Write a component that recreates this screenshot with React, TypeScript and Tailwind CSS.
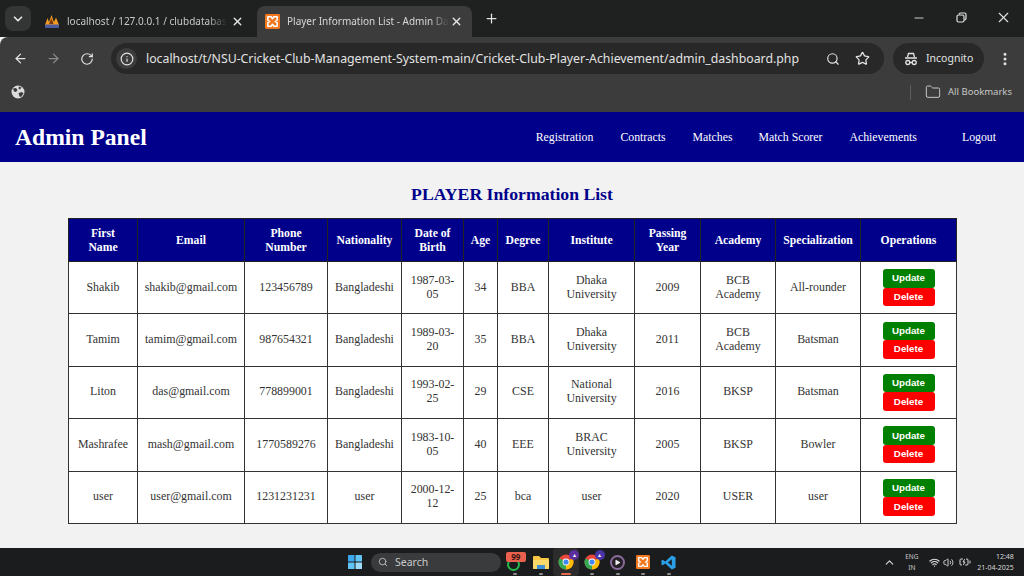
import { ArrowLeft, ArrowRight, ChevronDown, ChevronUp, Folder, Info, MoreVertical, Plus, RotateCw, Search, Star, Volume2, Wifi, X, Minus, Play, BatteryCharging } from "lucide-react";

const rows = [
  ["Shakib", "shakib@gmail.com", "123456789", "Bangladeshi", "1987-03-05", "34", "BBA", "Dhaka University", "2009", "BCB Academy", "All-rounder"],
  ["Tamim", "tamim@gmail.com", "987654321", "Bangladeshi", "1989-03-20", "35", "BBA", "Dhaka University", "2011", "BCB Academy", "Batsman"],
  ["Liton", "das@gmail.com", "778899001", "Bangladeshi", "1993-02-25", "29", "CSE", "National University", "2016", "BKSP", "Batsman"],
  ["Mashrafee", "mash@gmail.com", "1770589276", "Bangladeshi", "1983-10-05", "40", "EEE", "BRAC University", "2005", "BKSP", "Bowler"],
  ["user", "user@gmail.com", "1231231231", "user", "2000-12-12", "25", "bca", "user", "2020", "USER", "user"],
];
const heads = ["First\nName", "Email", "Phone\nNumber", "Nationality", "Date of\nBirth", "Age", "Degree", "Institute", "Passing\nYear", "Academy", "Specialization", "Operations"];
const widths = ["w-[69px]", "w-[107px]", "w-[83px]", "w-[74px]", "w-[62px]", "w-[34px]", "w-[51px]", "w-[86px]", "w-[66px]", "w-[75px]", "w-[85px]", "w-[96px]"];
const nav = [
  ["Registration", "mr-[27px]"],
  ["Contracts", "mr-[27px]"],
  ["Matches", "mr-[26px]"],
  ["Match Scorer", "mr-[27px]"],
  ["Achievements", "mr-[45px]"],
  ["Logout", "mr-[28px]"],
];

function Xampp({ size = 15 }: { size?: number }) {
  return (
    <svg width={size} height={size} viewBox="0 0 16 16" className="shrink-0">
      <rect width="16" height="16" rx="1.5" fill="#f5781f" />
      <path d="M3 3h3.5L8 5l1.5-2H13v3.5L11 8l2 1.5V13H9.500L8 11l-1.500 2H3V9.500L5 8 3 6.500z" fill="none" stroke="#fff" strokeWidth="1.600" strokeLinejoin="round" />
    </svg>
  );
}

function Pma() {
  return (
    <svg width="16" height="15" viewBox="0 0 16 15" className="shrink-0">
      <path d="M1 11 3.500 4 5 8 7.500 1 10 8 12 3.500 15 11z" fill="#f59a23" />
      <path d="M5 10 7.500 4 9.500 10z" fill="#7a3b10" />
      <rect x="1" y="10.500" width="14" height="3.500" rx="1" fill="#4c5c9c" />
    </svg>
  );
}

function GlobeFilled() {
  return (
    <svg width="14" height="14" viewBox="0 0 14 14" className="ml-[11px]">
      <circle cx="7" cy="7" r="6.500" fill="#dcdcdc" />
      <path d="M2 3.500 5 3 6.500 5 5 7 3 6.500zM8 1.500 10.500 2.500 9 4.500 7.500 3.500zM7.500 8 11 7 12.500 8.500 10 12 8.500 11.500z" fill="#3c3c3c" />
    </svg>
  );
}

function ChromeIcon({ badge }: { badge: string }) {
  return (
    <div className="relative w-[16px] h-[16px]">
      <svg width="16" height="16" viewBox="0 0 16 16">
        <circle cx="8" cy="8" r="7.500" fill="#e8453c" />
        <path d="M8 8 1.500 4.200A7.500 7.500 0 0 0 8 15.500z" fill="#34a853" />
        <path d="M8 8 8 15.500A7.500 7.500 0 0 0 14.500 4.200z" fill="#fbbc05" />
        <circle cx="8" cy="8" r="3.400" fill="#fff" />
        <circle cx="8" cy="8" r="2.600" fill="#4285f4" />
      </svg>
      <div className={`absolute -top-[4px] -right-[5px] w-[10px] h-[10px] rounded-full ${badge} flex items-center justify-center text-[6px] leading-none text-white`}>▴</div>
    </div>
  );
}

function TaskDot({ children, active = false }: { children: React.ReactNode; active?: boolean }) {
  return (
    <div className={`w-[25.700px] h-[28px] shrink-0 flex flex-col items-center justify-center relative rounded ${active ? "bg-[#2c2c2c]" : ""}`}>
      {children}
      <div className={`absolute bottom-[1px] h-[2px] rounded ${active ? "w-[10px] bg-[#e06a4e]" : "w-[4px] bg-[#8c8c8c]"}`} />
    </div>
  );
}

export default function App() {
  return (
    <div className="w-[1024px] h-[576px] overflow-hidden flex flex-col bg-[#f2f2f2] font-['Liberation_Serif',serif]">
      {/* tab strip */}
      <div className="h-[37px] shrink-0 bg-[#1f2020] flex items-end font-['Noto_Sans',sans-serif] text-[#c7c7c7]">
        <div className="w-[26px] h-[25px] ml-[5px] mb-[6px] rounded-lg bg-[#343535] flex items-center justify-center">
          <ChevronDown size={14} strokeWidth={3} className="text-[#e3e3e3]" />
        </div>
        <div className="w-[226px] h-[31px] flex items-center pl-[13px] pr-[13px]">
          <Pma />
          <span className="ml-[7px] whitespace-nowrap text-[10px] [mask-image:linear-gradient(to_right,black_88%,transparent)]">localhost / 127.0.0.1 / clubdatabas</span>
          <X size={13} strokeWidth={2.500} className="ml-auto text-[#e3e3e3]" />
        </div>
        <div className="w-[215px] h-[31px] bg-[#3c3c3c] rounded-t-lg flex items-center pl-[8px] pr-[9px]">
          <Xampp />
          <span className="ml-[7px] whitespace-nowrap text-[10px] text-[#d8d8d8] [mask-image:linear-gradient(to_right,black_88%,transparent)]">Player Information List - Admin Da</span>
          <X size={13} strokeWidth={2.500} className="ml-auto text-[#e3e3e3]" />
        </div>
        <Plus size={15} strokeWidth={2} className="ml-[12px] mb-[11px] text-[#e3e3e3]" />
        <div className="ml-auto mb-[11px] flex items-center text-[#e3e3e3]">
          <Minus size={14} strokeWidth={1.500} />
          <svg width="11" height="11" viewBox="0 0 11 11" className="ml-[30px]" fill="none" stroke="currentColor" strokeWidth="1.200">
            <rect x="1" y="3" width="7" height="7" rx="1.500" />
            <path d="M3 2.500Q3 1 4.500 1H8.500Q10 1 10 2.500V6.500Q10 8 8.500 8" />
          </svg>
          <X size={17} strokeWidth={1.500} className="ml-[28px] mr-[12px]" />
        </div>
      </div>

      {/* toolbar */}
      <div className="h-[43px] shrink-0 bg-[#3c3c3c] rounded-tl-lg flex items-center text-[#e3e3e3] font-['Noto_Sans',sans-serif]">
        <ArrowLeft size={15} strokeWidth={2} className="ml-[13px] shrink-0" />
        <ArrowRight size={15} strokeWidth={2} className="ml-[18px] shrink-0 text-[#8a8a8a]" />
        <RotateCw size={14} strokeWidth={2} className="ml-[19px] shrink-0" />
        <div className="ml-[17px] w-[773px] h-[31px] shrink-0 rounded-full bg-[#282828] flex items-center pl-[5px]">
          <div className="w-[21px] h-[21px] rounded-full bg-[#3c3c3c] flex items-center justify-center">
            <Info size={14} strokeWidth={2} />
          </div>
          <span className="ml-[9px] pt-[1px] text-[12.300px] text-[#e3e3e3] whitespace-nowrap">localhost/t/NSU-Cricket-Club-Management-System-main/Cricket-Club-Player-Achievement/admin_dashboard.php</span>
          <Search size={14} strokeWidth={2} className="ml-auto shrink-0" />
          <Star size={15} strokeWidth={2} className="ml-[15px] mr-[14px] shrink-0" />
        </div>
        <div className="ml-[9px] w-[91px] h-[31px] shrink-0 rounded-full bg-[#282828] flex items-center pl-[11px]">
          <svg width="14" height="14" viewBox="0 0 14 14" fill="none" stroke="currentColor" strokeWidth="1.300">
            <path d="M3.500 5 4.500 1.500H9.500L10.500 5M1 6H13" />
            <circle cx="3.800" cy="10.500" r="2" />
            <circle cx="10.200" cy="10.500" r="2" />
            <path d="M5.800 10.500H8.200" />
          </svg>
          <span className="ml-[8px] text-[10.500px]">Incognito</span>
        </div>
        <MoreVertical size={16} strokeWidth={2.500} className="ml-[13px] shrink-0" />
      </div>

      {/* bookmarks */}
      <div className="h-[32px] shrink-0 bg-[#3c3c3c] pb-[8px] flex items-center text-[#c7c7c7] font-['Noto_Sans',sans-serif]">
        <GlobeFilled />
        <div className="ml-auto w-[1px] h-[15px] bg-[#5e5e5e]" />
        <Folder size={16} strokeWidth={1.500} className="ml-[14px]" />
        <span className="ml-[7px] mr-[12px] pt-[1px] text-[9.500px]">All Bookmarks</span>
      </div>

      {/* header */}
      <header className="h-[50px] shrink-0 pt-[1px] bg-[#00008b] flex items-center text-white">
        <h1 className="ml-[15px] text-[23.600px] font-bold leading-none">Admin Panel</h1>
        <nav className="ml-auto flex text-[11.800px]">
          {nav.map(([n, m]) => (
            <span key={n} className={m}>{n}</span>
          ))}
        </nav>
      </header>

      {/* main */}
      <main className="flex-1 min-h-0 flex flex-col">
        <h2 className="h-[56px] pt-[9px] shrink-0 flex items-center justify-center text-[17.700px] font-bold text-[#00008b]">PLAYER Information List</h2>
        <table className="ml-[68px] w-[888px] table-fixed border-collapse text-[11.900px] leading-[14px] text-[#333] bg-white">
          <colgroup>
            {widths.map((w, i) => (
              <col key={i} className={w} />
            ))}
          </colgroup>
          <thead>
            <tr className="h-[43px] bg-[#00008b] text-white">
              {heads.map((h) => (
                <th key={h} className="border border-[#222] px-[4px] pt-[2px] text-[11.700px] font-bold text-center whitespace-pre-line">{h}</th>
              ))}
            </tr>
          </thead>
          <tbody>
            {rows.map((r) => (
              <tr key={r[0]} className="h-[52.400px]">
                {r.map((c, i) => (
                  <td key={i} className="border border-[#333] px-[2px] pb-[2px] text-center">
                    {i === 4 ? <div className="w-[46px] mx-auto break-words">{c}</div> : i === 7 || i === 9 ? <div className="w-[60px] mx-auto">{c}</div> : c}
                  </td>
                ))}
                <td className="border border-[#333] p-0">
                  <div className="flex flex-col items-center font-['Liberation_Sans',sans-serif] font-bold text-[9.750px] text-white">
                    <span className="w-[52px] h-[18.500px] rounded-[3px] bg-[#008000] flex items-center justify-center">Update</span>
                    <span className="w-[52px] h-[18.500px] rounded-[3px] bg-[#ff0000] flex items-center justify-center">Delete</span>
                  </div>
                </td>
              </tr>
            ))}
          </tbody>
        </table>
      </main>

      {/* taskbar */}
      <footer className="h-[28px] shrink-0 bg-[#1b1c1e] flex items-center font-['Noto_Sans',sans-serif] text-[#dcdcdc]">
        <svg width="14" height="14" viewBox="0 0 14 14" className="ml-[348px] shrink-0">
          <rect x="0" y="0" width="6.500" height="6.500" rx="0.500" fill="#3ba7ee" />
          <rect x="7.500" y="0" width="6.500" height="6.500" rx="0.500" fill="#62c3f5" />
          <rect x="0" y="7.500" width="6.500" height="6.500" rx="0.500" fill="#62c3f5" />
          <rect x="7.500" y="7.500" width="6.500" height="6.500" rx="0.500" fill="#9ddcf9" />
        </svg>
        <div className="ml-[9px] w-[130px] h-[19px] shrink-0 rounded-full bg-[#3a3b3d] flex items-center pl-[7px] text-[#c9c9c9]">
          <Search size={10} strokeWidth={2} />
          <span className="ml-[7px] pt-[2px] text-[10.500px]">Search</span>
        </div>
        <div className="ml-[1px] flex items-center shrink-0">
          <TaskDot>
            <div className="relative w-[16px] h-[16px]">
              <div className="w-[13px] h-[13px] mt-[4px] rounded-full border-2 border-[#25b94a]" />
              <div className="absolute -top-[2px] -left-[1px] w-[20px] h-[10px] bg-[#e9604e] rounded-[2px] text-[8px] leading-[10px] text-center text-[#3a1510] font-bold">99</div>
            </div>
          </TaskDot>
          <TaskDot>
            <svg width="16" height="14" viewBox="0 0 16 14">
              <path d="M0 2Q0 1 1 1H6L8 3H15Q16 3 16 4V13Q16 14 15 14H1Q0 14 0 13z" fill="#f7c744" />
              <rect x="0" y="5" width="16" height="9" rx="1" fill="#fcd968" />
              <rect x="4" y="10" width="8" height="4" fill="#3d8fd6" />
            </svg>
          </TaskDot>
          <TaskDot active><ChromeIcon badge="bg-[#5b2f9e]" /></TaskDot>
          <TaskDot><ChromeIcon badge="bg-[#4a35a8]" /></TaskDot>
          <TaskDot>
            <div className="w-[15px] h-[15px] rounded-full border-2 border-[#8a6a9a] bg-[#231f25] flex items-center justify-center">
              <Play size={7} fill="#eee" strokeWidth={0} />
            </div>
          </TaskDot>
          <TaskDot><Xampp size={14} /></TaskDot>
          <TaskDot>
            <svg width="15" height="15" viewBox="0 0 16 16">
              <path d="M11.500 0.500 15.500 2.400V13.600L11.500 15.500 4.500 9 1.800 11 0.500 10.300V5.700L1.800 5 4.500 7z" fill="#2a9fe8" />
              <path d="M11.500 4.500 7.500 8 11.500 11.500z" fill="#1b1c1e" />
            </svg>
          </TaskDot>
        </div>
        <ChevronUp size={13} strokeWidth={2} className="ml-[201px] shrink-0" />
        <div className="ml-[7px] w-[18px] shrink-0 flex flex-col items-center text-[6.500px] leading-[11px] text-[#c8c8c8]">
          <span>ENG</span>
          <span>IN</span>
        </div>
        <Wifi size={11} strokeWidth={2.500} className="ml-[8px] shrink-0" />
        <Volume2 size={11} strokeWidth={2} className="ml-[3px] shrink-0" />
        <BatteryCharging size={12} strokeWidth={2} className="ml-[5px] shrink-0" />
        <div className="ml-[6px] mr-[10px] w-[37px] shrink-0 flex flex-col items-end text-[7px] leading-[11px] text-[#d8d8d8] whitespace-nowrap">
          <span>12:48</span>
          <span>21-04-2025</span>
        </div>
      </footer>
    </div>
  );
}
